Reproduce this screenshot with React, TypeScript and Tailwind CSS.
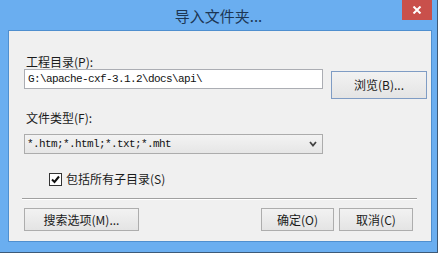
import React from "react";

const cjk = { fontFamily: '"Microsoft YaHei","Noto Sans CJK SC","Noto Sans",sans-serif' };
const mono = { fontFamily: '"Liberation Mono","DejaVu Sans Mono",monospace' };

function Btn({ w, label, blue }: { w: string; label: string; blue?: boolean }) {
  return (
    <div
      className={`${w} flex items-center justify-center border ${blue ? "h-[28px] border-[#7f9cc4]" : "h-[23px] border-[#adadad]"} bg-gradient-to-b from-[#f2f2f2] to-[#e4e4e4] text-[12px] text-[#1a1a1a]`}
      style={cjk}
    >
      {label}
    </div>
  );
}

export default function App() {
  return (
    <div className="w-[441px] h-[254px] bg-white overflow-hidden">
      <div className="w-[438px] h-[253px] bg-[#6aaef0] border-r border-b border-[#3d5a78] flex flex-col">
        {/* title bar */}
        <div className="h-[30px] relative flex items-center justify-center">
          <span className="text-[15px] text-[#1c3654] leading-none mt-[1px]" style={cjk}>
            导入文件夹...
          </span>
          <div className="absolute right-[5px] top-0 w-[30px] h-[20px] bg-[#c9504b] flex items-center justify-center">
            <svg width="10" height="8" viewBox="0 0 10 8">
              <path d="M1.5 0.5 L8.5 7.5 M8.5 0.5 L1.5 7.5" stroke="#fff" strokeWidth="2" />
            </svg>
          </div>
        </div>
        {/* content */}
        <div className="ml-[8px] mr-[5px] h-[212px] bg-[#f0f0f0] border border-[#4f8fcf] flex flex-col">
          <div className="ml-[17px] mt-[23px] text-[12px] leading-[15px] text-[#1a1a1a]" style={cjk}>
            工程目录(P):
          </div>
          <div className="flex items-start ml-[15px]">
            <div className="w-[299px] h-[20px] bg-white border border-[#abadb3] flex items-center pl-[3px]">
              <span className="text-[11px] tracking-[-0.6px] text-[#111]" style={mono}>
                G:\apache-cxf-3.1.2\docs\api\
              </span>
            </div>
            <div className="ml-[8px] mt-[2px]">
              <Btn w="w-[96px]" label="浏览(B)..." blue />
            </div>
          </div>
          <div className="ml-[17px] mt-[11px] text-[12px] leading-[15px] text-[#1a1a1a]" style={cjk}>
            文件类型(F):
          </div>
          <div className="ml-[15px] mt-[9px] w-[299px] h-[20px] border border-[#acacac] bg-gradient-to-b from-[#f3f3f3] to-[#e6e6e6] flex items-center justify-between pl-[2px] pr-[5px]">
            <span className="text-[11px] tracking-[-0.6px] text-[#111]" style={mono}>
              *.htm;*.html;*.txt;*.mht
            </span>
            <svg width="8" height="6" viewBox="0 0 8 6">
              <path d="M1 1 L4 4.5 L7 1" stroke="#444" strokeWidth="1.8" fill="none" />
            </svg>
          </div>
          <div className="ml-[40px] mt-[17px] flex items-center h-[16px]">
            <div className="w-[13px] h-[13px] bg-white border border-[#333] flex items-center justify-center">
              <svg width="9" height="9" viewBox="0 0 9 9">
                <path d="M1 4.5 L3.5 7 L8 1.5" stroke="#111" strokeWidth="2" fill="none" />
              </svg>
            </div>
            <span className="ml-[4px] text-[12px] text-[#1a1a1a]" style={cjk}>
              包括所有子目录(S)
            </span>
          </div>
          <div className="ml-[13px] mr-[14px] mt-[11px] h-[2px] border-t border-[#a0a0a0] border-b border-b-white" />
          <div className="ml-[15px] mr-[18px] mt-[8px] flex justify-between">
            <Btn w="w-[115px]" label="搜索选项(M)..." />
            <div className="flex gap-[5px]">
              <Btn w="w-[73px]" label="确定(O)" />
              <Btn w="w-[74px]" label="取消(C)" />
            </div>
          </div>
        </div>
      </div>
    </div>
  );
}
